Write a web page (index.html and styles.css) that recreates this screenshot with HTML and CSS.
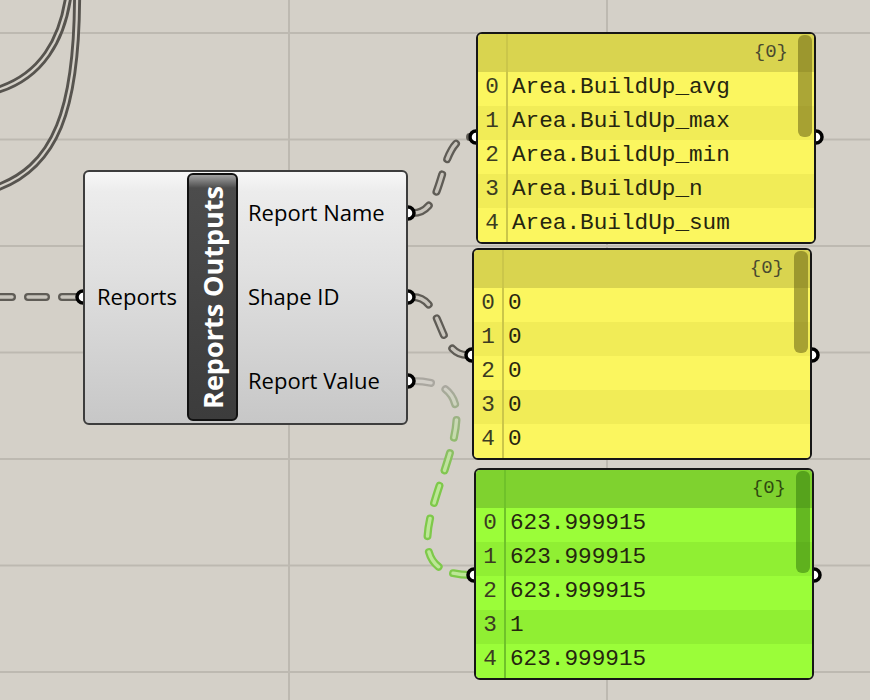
FILE: index.html
```html
<!DOCTYPE html>
<html lang="en">
<head>
  <meta charset="UTF-8">
  <meta name="viewport" content="width=device-width, initial-scale=1.0">
  <title>Reports Outputs</title>
  <link rel="stylesheet" href="styles.css">
</head>
<body>
  <div class="canvas">
    <svg class="wires" width="870" height="700" viewBox="0 0 870 700">
      <defs>
        <linearGradient id="fadeOut" gradientUnits="userSpaceOnUse" x1="0" y1="385" x2="0" y2="480">
          <stop offset="0" stop-color="#aaa7a0"/>
          <stop offset="1" stop-color="#7ec94a"/>
        </linearGradient>
        <linearGradient id="fadeIn" gradientUnits="userSpaceOnUse" x1="0" y1="385" x2="0" y2="480">
          <stop offset="0" stop-color="#d2cfc8"/>
          <stop offset="1" stop-color="#bde797"/>
        </linearGradient>
      </defs>

      <!-- list wires coming from above -->
      <path class="list-o" d="M70,-20 C66,40 40,80 -10,92"/>
      <path class="list-i" d="M70,-20 C66,40 40,80 -10,92"/>
      <path class="list-o" d="M77,-20 C79,110 56,170 -10,190"/>
      <path class="list-i" d="M77,-20 C79,110 56,170 -10,190"/>

      <!-- dashed wires -->
      <path class="dash-o" d="M-6,297 L80,297"/>
      <path class="dash-i" d="M-6,297 L80,297"/>
      <path class="dash-o" d="M413,213 C448,213 436,137 471,137"/>
      <path class="dash-i" d="M413,213 C448,213 436,137 471,137"/>
      <path class="dash-o" d="M413,297 C443,297 437,355 467,355"/>
      <path class="dash-i" d="M413,297 C443,297 437,355 467,355"/>
      <path class="dash-o fade" d="M413,381 C535,381 349,575 471,575"/>
      <path class="dash-i fade" d="M413,381 C535,381 349,575 471,575"/>

      <!-- ports -->
      <circle class="port" cx="83" cy="297" r="6"/>
      <circle class="port" cx="408" cy="213" r="6"/>
      <circle class="port" cx="408" cy="297" r="6"/>
      <circle class="port" cx="408" cy="381" r="6"/>
      <circle class="port" cx="476" cy="137" r="6"/>
      <circle class="port" cx="816" cy="137" r="6"/>
      <circle class="port" cx="472" cy="355" r="6"/>
      <circle class="port" cx="812" cy="355" r="6"/>
      <circle class="port" cx="474" cy="575" r="6"/>
      <circle class="port" cx="814" cy="575" r="6"/>
    </svg>

    <div class="component">
      <div class="inputs"><span>Reports</span></div>
      <div class="title"><span>Reports Outputs</span></div>
      <div class="outputs">
        <span>Report Name</span>
        <span>Shape ID</span>
        <span>Report Value</span>
      </div>
    </div>

    <div class="panel yellow panel-names">
      <div class="head"><span class="idx"></span><span class="path">{0}</span></div>
      <div class="row"><span class="idx">0</span><span class="val">Area.BuildUp_avg</span></div>
      <div class="row"><span class="idx">1</span><span class="val">Area.BuildUp_max</span></div>
      <div class="row"><span class="idx">2</span><span class="val">Area.BuildUp_min</span></div>
      <div class="row"><span class="idx">3</span><span class="val">Area.BuildUp_n</span></div>
      <div class="row"><span class="idx">4</span><span class="val">Area.BuildUp_sum</span></div>
      <div class="scroll"></div>
    </div>

    <div class="panel yellow panel-ids">
      <div class="head"><span class="idx"></span><span class="path">{0}</span></div>
      <div class="row"><span class="idx">0</span><span class="val">0</span></div>
      <div class="row"><span class="idx">1</span><span class="val">0</span></div>
      <div class="row"><span class="idx">2</span><span class="val">0</span></div>
      <div class="row"><span class="idx">3</span><span class="val">0</span></div>
      <div class="row"><span class="idx">4</span><span class="val">0</span></div>
      <div class="scroll"></div>
    </div>

    <div class="panel green panel-values">
      <div class="head"><span class="idx"></span><span class="path">{0}</span></div>
      <div class="row"><span class="idx">0</span><span class="val">623.999915</span></div>
      <div class="row"><span class="idx">1</span><span class="val">623.999915</span></div>
      <div class="row"><span class="idx">2</span><span class="val">623.999915</span></div>
      <div class="row"><span class="idx">3</span><span class="val">1</span></div>
      <div class="row"><span class="idx">4</span><span class="val">623.999915</span></div>
      <div class="scroll"></div>
    </div>
  </div>
</body>
</html>
```

FILE: styles.css
```css
body {
  margin: 0;
  background: #d4d0c8;
  font-family: "Open Sans", "Noto Sans", sans-serif;
}
.canvas {
  position: relative;
  width: 870px;
  height: 700px;
  overflow: hidden;
  background-color: #d4d0c8;
  background-image:
    linear-gradient(to right, #bdb9b1 0 2px, transparent 2px),
    linear-gradient(to bottom, #bdb9b1 0 2px, transparent 2px);
  background-size: 318px 100%, 100% 106.5px;
  background-position: 288px 0, 0 32px;
}
.wires {
  position: absolute;
  left: 0;
  top: 0;
}

/* wires */
.list-o, .list-i, .dash-o, .dash-i {
  fill: none;
}
.list-o {
  stroke: #57544f;
  stroke-width: 8;
}
.list-i {
  stroke: #d4d0c8;
  stroke-width: 2.2;
}
.dash-o {
  stroke: #5f5c56;
  stroke-width: 8;
  stroke-linecap: round;
  stroke-dasharray: 18 16;
}
.dash-i {
  stroke: #c9c5bd;
  stroke-width: 3.4;
  stroke-linecap: round;
  stroke-dasharray: 18 16;
}
.dash-o.fade {
  stroke: url(#fadeOut);
}
.dash-i.fade {
  stroke: url(#fadeIn);
}
.port {
  fill: #fff;
  stroke: #000;
  stroke-width: 3.5;
}

/* component */
.component {
  position: absolute;
  left: 83px;
  top: 170px;
  width: 325px;
  height: 255px;
  box-sizing: border-box;
  border: 2px solid #3d3d3d;
  border-radius: 6px;
  background: linear-gradient(#f7f7f7, #ececec 8%, #e0e0e0 40%, #c7c7c7);
  display: flex;
  font-size: 22px;
  color: #000;
}
.inputs {
  width: 102px;
  box-sizing: border-box;
  padding: 0 0 3px 12px;
  display: flex;
  align-items: center;
}
.title {
  width: 51px;
  box-sizing: border-box;
  margin: 1px 0 2px;
  border: 2px solid #111;
  border-radius: 6px;
  background: linear-gradient(#a3a3a3, #4c4c4c 13px, #3c3c3c);
  display: flex;
  align-items: center;
  justify-content: center;
}
.title span {
  writing-mode: vertical-rl;
  transform: rotate(180deg);
  color: #fff;
  font-weight: 700;
  font-size: 27px;
  white-space: nowrap;
}
.outputs {
  flex: 1;
  padding-left: 10px;
  display: flex;
  flex-direction: column;
}
.outputs span {
  flex: 1;
  display: flex;
  align-items: center;
  padding-bottom: 3px;
}

/* panels */
.panel {
  position: absolute;
  width: 340px;
  box-sizing: border-box;
  border: 2px solid #161616;
  border-radius: 6px;
  overflow: hidden;
  display: flex;
  flex-direction: column;
  font-family: "Liberation Mono", "Courier New", monospace;
  font-size: 22.7px;
  color: #25250f;
  box-shadow: inset 1px 1px 0 rgba(255, 255, 255, 0.7);
}
.panel-names {
  left: 476px;
  top: 32px;
}
.panel-ids {
  left: 472px;
  top: 248px;
}
.panel-values {
  left: 474px;
  top: 468px;
}
.head, .row {
  display: flex;
}
.head {
  height: 38px;
}
.row {
  height: 34px;
  line-height: 31px;
}
.idx {
  width: 28px;
  flex: none;
  text-align: center;
  border-right: 2px solid;
  color: #3b3b22;
}
.val {
  padding-left: 4px;
}
.path {
  flex: 1;
  text-align: right;
  padding-right: 26px;
  font-size: 19px;
  line-height: 36px;
  color: #4a4a30;
}
.scroll {
  position: absolute;
  right: 2px;
  top: 1px;
  width: 14px;
  height: 102px;
  border-radius: 6px;
}

.yellow .head { background: #d9d44f; }
.yellow .row { background: #fbf65f; }
.yellow .row:nth-child(odd) { background: #f1ec57; }
.yellow .idx { border-color: #cbc64a; }
.yellow .scroll { background: rgba(105, 100, 20, 0.55); }

.green .head { background: #7fd22f; }
.green .row { background: #9bfd39; }
.green .row:nth-child(odd) { background: #90ef33; }
.green .idx { border-color: #6fc22a; }
.green .scroll { background: rgba(45, 115, 10, 0.5); }
.green .path { color: #2f4a10; }
```
